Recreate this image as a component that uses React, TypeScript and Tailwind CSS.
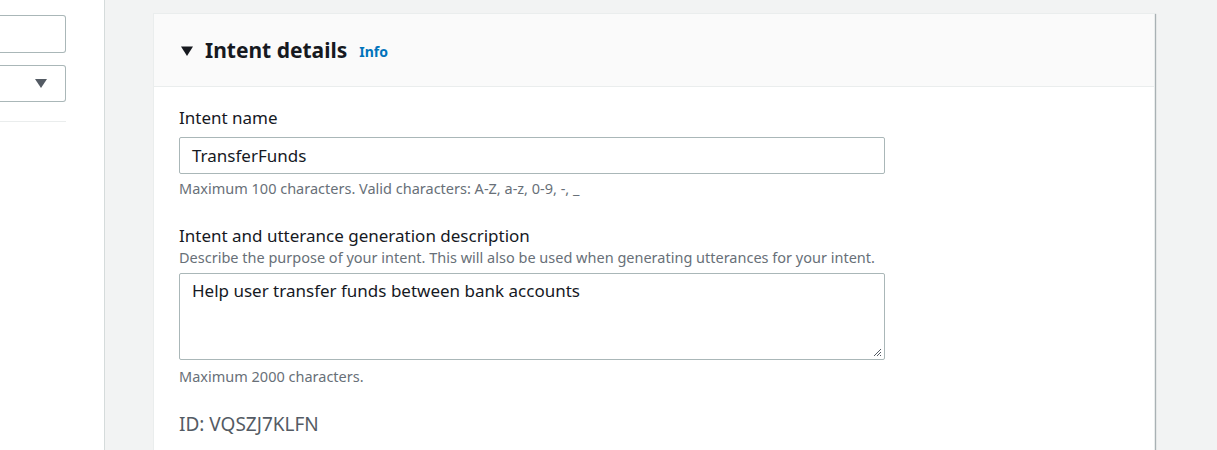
import React from 'react';

const App = () => {
  return (
    <div className="flex h-[450px] w-[1217px] overflow-hidden bg-[#f2f3f3] font-['Noto_Sans',sans-serif] text-[#16191f]">
      {/* left panel */}
      <div className="flex w-[105px] shrink-0 flex-col border-r border-[#d5dbdb] bg-white pr-[38px] pt-[15px]">
        <div className="h-[38px] rounded-r-[3px] border border-l-0 border-[#aab7b8] bg-white" />
        <div className="mt-[12px] flex h-[37px] items-center justify-end rounded-r-[3px] border border-l-0 border-[#aab7b8] bg-white pr-[18px]">
          <svg width="12" height="9" viewBox="0 0 12 9">
            <path d="M0 0h12L6 9z" fill="#545b64" />
          </svg>
        </div>
        <div className="mt-[19px] border-t border-[#eaeded]" />
      </div>

      {/* main */}
      <div className="flex-1 pl-[48px] pr-[62px] pt-[13px]">
        <div className="h-[460px] border-x border-t border-[#eaeded] bg-white shadow-[1px_1px_1px_0_rgba(0,28,36,0.3)]">
          <div className="flex h-[73px] items-center border-b border-[#eaeded] bg-[#fafafa] pl-[27px]">
            <svg width="12" height="10" viewBox="0 0 12 10" className="mt-[1px]">
              <path d="M0 0.5h12L6 10z" fill="#16191f" />
            </svg>
            <span className="ml-[12px] text-[21px] font-bold leading-none">Intent details</span>
            <span className="ml-[12px] mt-[3px] text-[14px] font-bold text-[#0073bb]">Info</span>
          </div>

          <div className="pl-[25px] pt-[20px]">
            <div className="text-[17px] leading-[22px]">Intent name</div>
            <div className="mt-[8px] flex h-[37px] w-[706px] items-center rounded-[2px] border border-[#aab7b8] pl-[12px] text-[17px]">
              TransferFunds
            </div>
            <div className="mt-[5px] text-[14.5px] leading-[18px] text-[#687078]">
              Maximum 100 characters. Valid characters: A-Z, a-z, 0-9, -, _
            </div>

            <div className="mt-[28px] text-[17px] leading-[22px]">Intent and utterance generation description</div>
            <div className="mt-[1px] text-[14.5px] leading-[18px] text-[#687078]">
              Describe the purpose of your intent. This will also be used when generating utterances for your intent.
            </div>
            <div className="relative mt-[7px] h-[87px] w-[706px] rounded-[2px] border border-[#aab7b8] pl-[12px] pt-[4px] text-[17px]">
              Help user transfer funds between bank accounts
              <svg width="9" height="9" viewBox="0 0 9 9" className="absolute bottom-[2px] right-[2px]">
                <path d="M8 1L1 8M8 4L4 8M8 7L7 8" stroke="#545b64" strokeWidth="1" />
              </svg>
            </div>
            <div className="mt-[7px] text-[14.5px] leading-[18px] text-[#687078]">Maximum 2000 characters.</div>

            <div className="mt-[28px] text-[19px] leading-[22px] text-[#545b64]">ID: VQSZJ7KLFN</div>
          </div>
        </div>
      </div>
    </div>
  );
};

export default App;
